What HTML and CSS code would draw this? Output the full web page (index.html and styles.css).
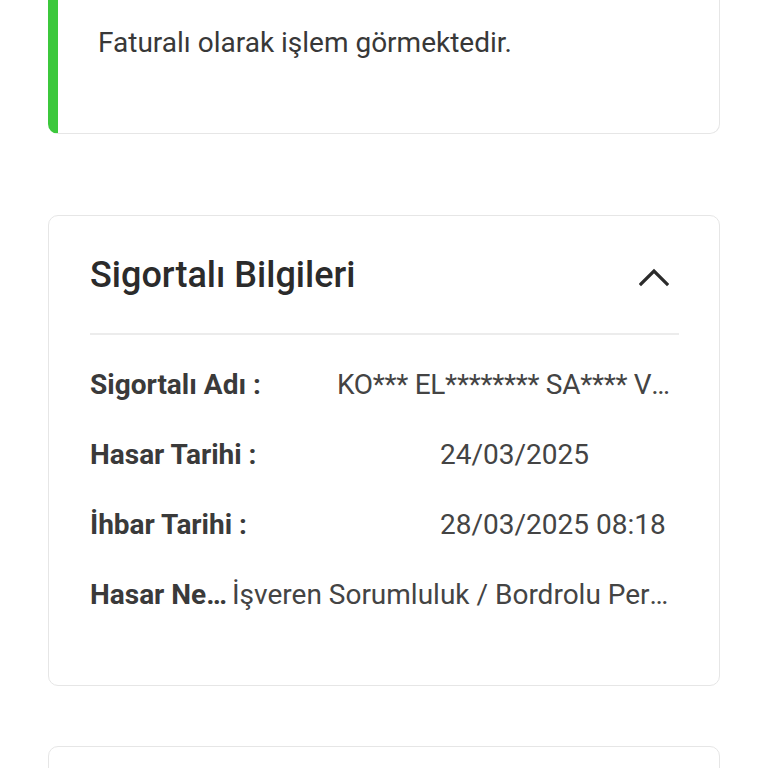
FILE: index.html
```html
<!DOCTYPE html>
<html lang="tr">
<head>
    <meta charset="UTF-8">
    <meta name="viewport" content="width=device-width, initial-scale=1.0">
    <title>Hasar Detayı</title>
    <link rel="stylesheet" href="styles.css">
</head>
<body>
    <div class="page">
        <div class="card card-status">
            <p class="status-text">Faturalı olarak işlem görmektedir.</p>
        </div>

        <div class="card card-info">
            <div class="card-header">
                <h2 class="card-title">Sigortalı Bilgileri</h2>
                <svg class="chevron" width="30" height="20" viewBox="0 0 30 20">
                    <polyline points="2,17 15,4 28,17" fill="none" stroke="#2b2b2b" stroke-width="3.2" stroke-linecap="square"/>
                </svg>
            </div>
            <div class="info-list">
                <div class="info-row">
                    <span class="info-label label-name">Sigortalı Adı :</span>
                    <span class="info-value">KO*** EL******** SA**** VE**** TİC. A.Ş.</span>
                </div>
                <div class="info-row">
                    <span class="info-label label-date">Hasar Tarihi :</span>
                    <span class="info-value">24/03/2025</span>
                </div>
                <div class="info-row">
                    <span class="info-label label-date">İhbar Tarihi :</span>
                    <span class="info-value">28/03/2025 08:18</span>
                </div>
                <div class="info-row">
                    <span class="info-label label-short">Hasar Nedeni :</span>
                    <span class="info-value">İşveren Sorumluluk / Bordrolu Personel</span>
                </div>
            </div>
        </div>

        <div class="card card-next"></div>
    </div>
</body>
</html>
```

FILE: styles.css
```css
* {
    box-sizing: border-box;
}

body {
    margin: 0;
    background-color: #ffffff;
    font-family: Roboto, "Noto Sans", sans-serif;
    color: #333333;
}

.page {
    padding: 0 48px;
}

.card {
    background-color: #fff;
    border: 1px solid #e6e6e6;
    border-radius: 10px;
}

/* tarjeta de estado con borde verde */
.card-status {
    margin-top: -40px;
    margin-bottom: 81px;
    border-left: 10px solid #3cc83c;
    padding: 64px 40px 72px 40px;
}

.status-text {
    margin: 0;
    font-size: 28px;
    line-height: 36px;
    color: #383838;
}

.card-info {
    padding: 37px 40px 73px 41px;
    margin-bottom: 60px;
}

.card-header {
    display: flex;
    justify-content: space-between;
    align-items: center;
    padding-bottom: 36px;
    border-bottom: 2px solid #ececec;
}

.card-title {
    margin: 0;
    font-size: 36px;
    line-height: 44px;
    font-weight: 500;
    color: #2b2b2b;
}

.chevron {
    margin-right: 10px;
    margin-top: 4px;
}

.info-list {
    display: flex;
    flex-direction: column;
    gap: 36px;
    padding-top: 33px;
}

.info-row {
    display: flex;
    font-size: 28px;
    line-height: 34px;
}

.info-label {
    flex: none;
    font-weight: 700;
    color: #3a3a3a;
    white-space: nowrap;
    overflow: hidden;
    text-overflow: ellipsis;
}

.label-name {
    width: 247px;
}

.label-date {
    width: 350px;
}

.label-short {
    width: 142px;
}

.info-value {
    flex: 1;
    min-width: 0;
    color: #444;
    white-space: nowrap;
    overflow: hidden;
    text-overflow: ellipsis;
}

.label-name + .info-value {
    letter-spacing: -0.3px;
}

.card-next {
    height: 120px;
}
```
